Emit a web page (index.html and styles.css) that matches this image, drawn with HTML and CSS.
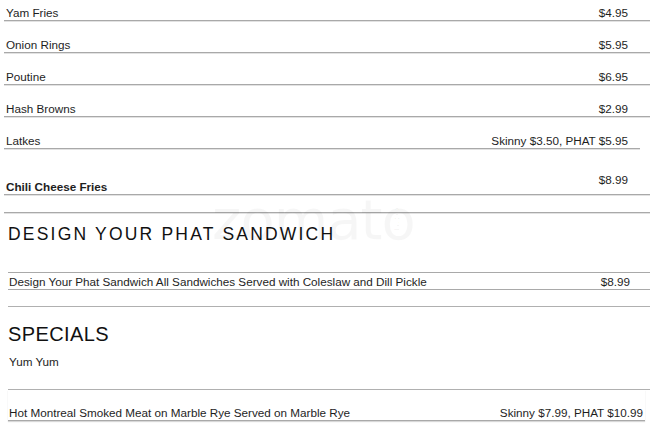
FILE: index.html
```html
<!DOCTYPE html>
<html>
<head>
<meta charset="utf-8">
<link rel="stylesheet" href="styles.css">
</head>
<body>
<div class="page">
  <div class="sides">
    <div class="row"><span class="name">Yam Fries</span><span class="price">$4.95</span></div>
    <div class="row"><span class="name">Onion Rings</span><span class="price">$5.95</span></div>
    <div class="row"><span class="name">Poutine</span><span class="price">$6.95</span></div>
    <div class="row"><span class="name">Hash Browns</span><span class="price">$2.99</span></div>
    <div class="row row-short"><span class="name">Latkes</span><span class="price">Skinny $3.50, PHAT $5.95</span></div>
    <div class="row row-tall"><span class="name bold">Chili Cheese Fries</span><span class="price price-raised">$8.99</span></div>
    <div class="spacer-line"></div>
  </div>

  <div class="section">
    <h2 class="heading heading-wide">DESIGN YOUR PHAT SANDWICH</h2>
    <div class="boxed-row"><span class="name">Design Your Phat Sandwich All Sandwiches Served with Coleslaw and Dill Pickle</span><span class="price">$8.99</span></div>
    <div class="gap-line"></div>

    <h2 class="heading heading-big">SPECIALS</h2>
    <div class="plain-row"><span class="name">Yum Yum</span></div>
    <div class="last-row"><span class="name">Hot Montreal Smoked Meat on Marble Rye Served on Marble Rye</span><span class="price">Skinny $7.99, PHAT $10.99</span></div>
  </div>

  <div class="watermark">zomato<span class="wm-com">.com</span></div>
</div>
</body>
</html>
```
FILE: styles.css
```css
html, body {
  margin: 0;
  padding: 0;
  background: #ffffff;
}
body {
  font-family: "Liberation Sans", Arial, sans-serif;
  color: #1e1e1e;
  overflow: hidden;
}
.page {
  position: relative;
  width: 650px;
  height: 427px;
  overflow: hidden;
}
.sides {
  margin-top: -11px;
  margin-left: 4px;
}
.row {
  display: flex;
  justify-content: space-between;
  align-items: flex-end;
  box-sizing: border-box;
  height: 32px;
  padding: 0 22px 1px 2px;
  border-bottom: 1px solid #a9a9a9;
  box-shadow: 0 1px 0 #e2e2e2;
  font-size: 11.7px;
  line-height: 13px;
}
.row-short {
  margin-right: 10px;
  padding-right: 12px;
}
.row-tall {
  height: 46px;
}
.bold {
  font-weight: bold;
}
.price-raised {
  padding-bottom: 7px;
}
.spacer-line {
  height: 17px;
  border-bottom: 1px solid #a9a9a9;
  box-shadow: 0 1px 0 #e2e2e2;
}
.section {
  margin-left: 8px;
}
.heading {
  margin: 0;
  font-weight: normal;
  color: #111;
}
.heading-wide {
  margin-top: 11px;
  font-size: 17.5px;
  line-height: 21px;
  letter-spacing: 2.2px;
}
.boxed-row {
  display: flex;
  justify-content: space-between;
  margin-top: 27px;
  padding: 2px 20px 1px 1px;
  border-top: 1px solid #a9a9a9;
  border-bottom: 1px solid #a9a9a9;
  font-size: 11.7px;
  line-height: 13px;
}
.gap-line {
  height: 16px;
  border-bottom: 1px solid #b0b0b0;
}
.heading-big {
  margin-top: 15px;
  font-size: 20px;
  line-height: 24px;
  letter-spacing: 0.4px;
}
.plain-row {
  padding: 9px 0 21px 1px;
  font-size: 11.7px;
  line-height: 13px;
  border-bottom: 1px solid #b0b0b0;
}
.last-row {
  display: flex;
  justify-content: space-between;
  margin-right: 5px;
  padding: 16px 2px 1px 1px;
  font-size: 11.7px;
  line-height: 13px;
  border-bottom: 1px solid #a9a9a9;
  box-shadow: 0 1px 1px #d8d8d8;
}
.watermark {
  position: absolute;
  left: 212px;
  top: 190px;
  font-family: "DejaVu Sans", sans-serif;
  font-size: 56px;
  line-height: 60px;
  letter-spacing: -1px;
  color: rgba(0, 0, 0, 0.035);
  pointer-events: none;
}
.wm-com {
  display: inline-block;
  font-size: 11px;
  letter-spacing: 0;
  transform: rotate(90deg);
  transform-origin: left top;
  vertical-align: top;
  margin-left: 12px;
  margin-top: 14px;
}
```
